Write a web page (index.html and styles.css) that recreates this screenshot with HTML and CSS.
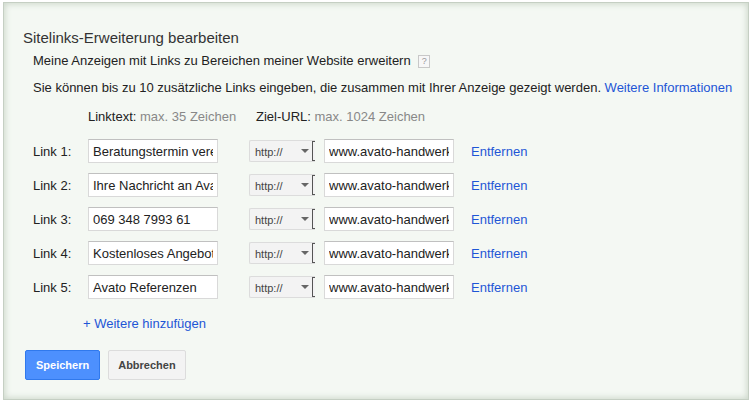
FILE: index.html
```html
<!DOCTYPE html>
<html lang="de">
<head>
    <meta charset="UTF-8">
    <title>Sitelinks-Erweiterung bearbeiten</title>
    <link rel="stylesheet" href="styles.css">
</head>
<body>
    <div class="panel">
        <h1>Sitelinks-Erweiterung bearbeiten</h1>
        <p class="intro">Meine Anzeigen mit Links zu Bereichen meiner Website erweitern <span class="help">?</span></p>
        <p class="intro">Sie können bis zu 10 zusätzliche Links eingeben, die zusammen mit Ihrer Anzeige gezeigt werden. <a href="#">Weitere Informationen</a></p>

        <div class="heads">
            <span class="head-text">Linktext: <em>max. 35 Zeichen</em></span>
            <span class="head-url">Ziel-URL: <em>max. 1024 Zeichen</em></span>
        </div>

        <div class="rows">
            <div class="row">
                <label>Link 1:</label>
                <input class="field" type="text" value="Beratungstermin vereinbaren">
                <div class="proto"><span>http://</span><i class="caret"></i></div>
                <input class="field" type="text" value="www.avato-handwerk.de">
                <a href="#">Entfernen</a>
            </div>
            <div class="row">
                <label>Link 2:</label>
                <input class="field" type="text" value="Ihre Nachricht an Avato">
                <div class="proto"><span>http://</span><i class="caret"></i></div>
                <input class="field" type="text" value="www.avato-handwerk.de">
                <a href="#">Entfernen</a>
            </div>
            <div class="row">
                <label>Link 3:</label>
                <input class="field" type="text" value="069 348 7993 61">
                <div class="proto"><span>http://</span><i class="caret"></i></div>
                <input class="field" type="text" value="www.avato-handwerk.de">
                <a href="#">Entfernen</a>
            </div>
            <div class="row">
                <label>Link 4:</label>
                <input class="field" type="text" value="Kostenloses Angebot">
                <div class="proto"><span>http://</span><i class="caret"></i></div>
                <input class="field" type="text" value="www.avato-handwerk.de">
                <a href="#">Entfernen</a>
            </div>
            <div class="row">
                <label>Link 5:</label>
                <input class="field" type="text" value="Avato Referenzen">
                <div class="proto"><span>http://</span><i class="caret"></i></div>
                <input class="field" type="text" value="www.avato-handwerk.de">
                <a href="#">Entfernen</a>
            </div>
        </div>

        <a class="add" href="#">+ Weitere hinzufügen</a>

        <div class="actions">
            <button class="btn primary">Speichern</button>
            <button class="btn">Abbrechen</button>
        </div>
    </div>
</body>
</html>
```

FILE: styles.css
```css
body {
    margin: 0;
    font-family: "Liberation Sans", Arial, sans-serif;
    font-size: 13px;
    color: #222;
    background: #fff;
}
a {
    color: #1e56d6;
    text-decoration: none;
}
.panel {
    box-sizing: border-box;
    width: 746px;
    height: 398px;
    margin: 2px 0 0 3px;
    padding: 26px 0 0 19px;
    background: #f4f8f3;
    border: 1px solid #c5cfc3;
    box-shadow: inset 0 0 6px 1px #cbd6c9;
}
h1 {
    margin: 0 0 6px;
    font-size: 15px;
    font-weight: normal;
    color: #333;
}
.intro {
    margin: 0 0 10px 10px;
    line-height: 17px;
}
.help {
    display: inline-block;
    width: 10px;
    height: 11px;
    margin-left: 4px;
    border: 1px solid #c8c8c8;
    background: #f7f7f7;
    color: #999;
    font-size: 9px;
    line-height: 11px;
    text-align: center;
    vertical-align: 1px;
}
.heads {
    display: flex;
    margin: 12px 0 0 65px;
    line-height: 17px;
}
.heads em {
    font-style: normal;
    color: #888;
}
.head-text {
    width: 168px;
}
.rows {
    margin-top: 9px;
}
.row {
    display: flex;
    align-items: center;
    height: 34px;
    margin-left: 10px;
}
.row label {
    width: 55px;
}
.field {
    box-sizing: border-box;
    width: 130px;
    height: 24px;
    padding: 0 4px;
    border: 1px solid #d9d9d9;
    border-top-color: #c0c0c0;
    background: #fff;
    font-family: inherit;
    font-size: 13px;
    color: #222;
}
.proto {
    display: flex;
    align-items: center;
    box-sizing: border-box;
    width: 66px;
    height: 22px;
    margin: 0 9px 0 31px;
    padding-left: 5px;
    border: 1px solid #dcdcdc;
    border-right: 0;
    border-radius: 2px 0 0 2px;
    background: #f3f3f3;
    font-size: 11px;
    color: #444;
}
.proto span {
    flex: 1;
    padding-top: 2px;
}
.proto::after {
    content: "";
    width: 2px;
    height: 18px;
    border: 1px solid #555;
    border-right: 0;
    margin-left: 3px;
}
.caret {
    width: 0;
    height: 0;
    border-left: 4px solid transparent;
    border-right: 4px solid transparent;
    border-top: 4px solid #666;
}
.row a {
    margin-left: 17px;
}
.add {
    display: inline-block;
    margin: 12px 0 0 60px;
}
.actions {
    display: flex;
    gap: 8px;
    margin: 19px 0 0 2px;
}
.btn {
    height: 30px;
    padding: 0 9px;
    border: 1px solid #dcdcdc;
    border-radius: 2px;
    background: #f3f3f3;
    font-family: inherit;
    font-size: 11px;
    font-weight: bold;
    color: #444;
}
.btn.primary {
    padding: 0 10px;
    border-color: #3079ed;
    background: #4d90fe;
    color: #fff;
}
```
